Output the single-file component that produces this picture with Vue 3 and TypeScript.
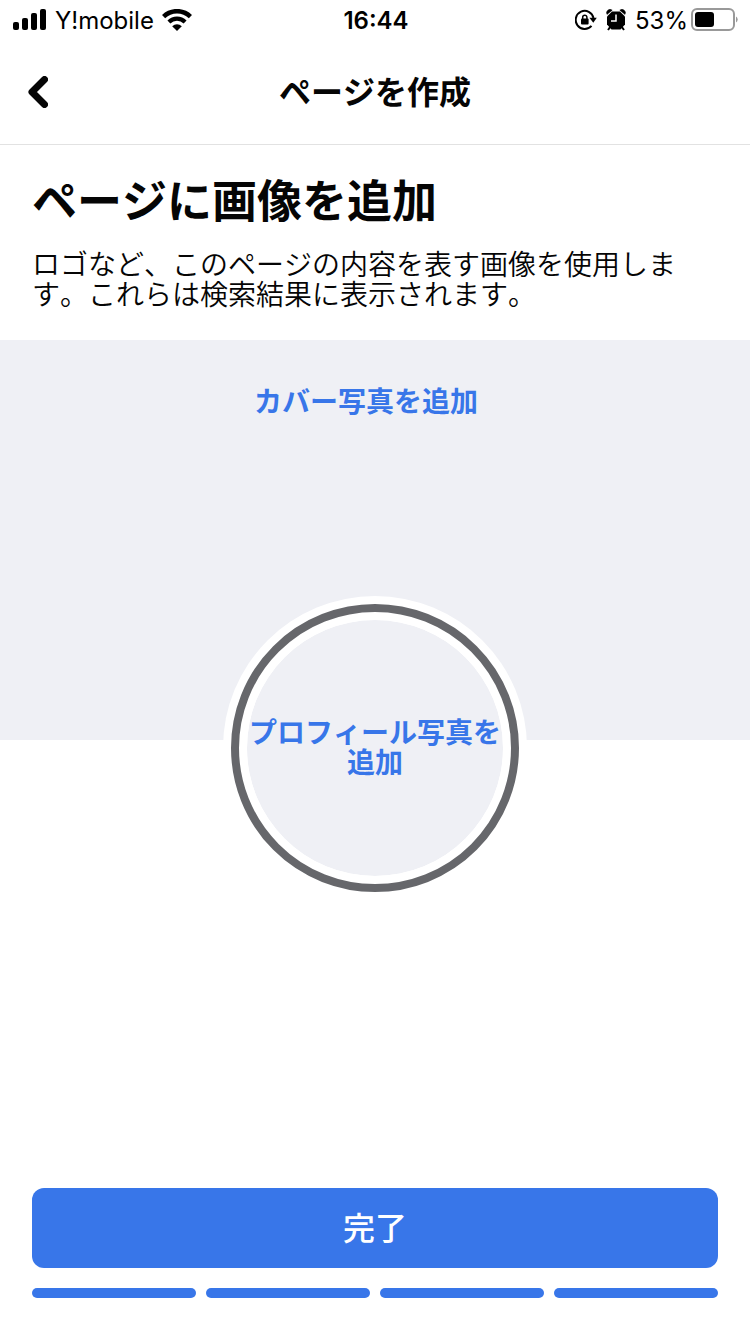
<script setup lang="ts">
import { ref } from 'vue'

interface Step {
  id: number
  label: string
}

const steps: Step[] = [1, 2, 3, 4].map((id) => ({ id, label: `ステップ${id}` }))
const carrier = ref('Y!mobile')
const time = ref('16:44')
const battery = ref(53)
</script>

<template>
  <div class="screen">
    <div class="status">
      <div class="status-left">
        <svg class="signal" width="34" height="22" viewBox="0 0 34 22" aria-hidden="true">
          <rect x="0" y="13" width="6" height="8" rx="2" />
          <rect x="9" y="9" width="6" height="12" rx="2" />
          <rect x="18" y="4" width="6" height="17" rx="2" />
          <rect x="27" y="0" width="6" height="21" rx="2" />
        </svg>
        <span class="carrier">{{ carrier }}</span>
        <svg class="wifi" width="30" height="22" viewBox="0 0 30 22" aria-hidden="true">
          <path d="M1.6 7.6a19.2 19.2 0 0 1 26.8 0" fill="none" stroke="#000" stroke-width="4.500" />
          <path d="M6.9 12.9a11.6 11.6 0 0 1 16.2 0" fill="none" stroke="#000" stroke-width="4.200" />
          <path d="M15 22l-4.8-4.8a7 7 0 0 1 9.600 0z" />
        </svg>
      </div>
      <span class="time">{{ time }}</span>
      <div class="status-right">
        <svg class="lock" width="22" height="22" viewBox="0 0 22 22" aria-hidden="true">
          <path d="M16.500 16.800A9 9 0 1 1 18.500 9" fill="none" stroke="#000" stroke-width="2" />
          <path d="M14.400 8.800h7.400l-3.500 5z" />
          <rect x="6" y="9.500" width="7.600" height="6" rx="1" />
          <path d="M7.700 10V8.300a2.100 2.100 0 0 1 4.200 0V10" fill="none" stroke="#000" stroke-width="1.500" />
        </svg>
        <svg class="alarm" width="20" height="22" viewBox="0 0 20 22" aria-hidden="true">
          <path d="M6 2.500h8l5 5v8l-4.500 5h-9L1 15.500v-8z" />
          <path d="M1 5.400a3.400 3.400 0 0 1 5.200-4.200zM19 5.400a3.400 3.400 0 0 0-5.200-4.200z" stroke="#000" stroke-width=".5" />
          <path d="M4.500 17.500L2 21M15.500 17.500l2.500 3.500" stroke="#000" stroke-width="2" />
          <path d="M10 5.500v6.500H5" fill="none" stroke="#fff" stroke-width="1.500" />
        </svg>
        <span class="percent">{{ battery }}%</span>
        <svg class="battery" width="48" height="24" viewBox="0 0 48 24" aria-hidden="true">
          <rect x="1" y="1" width="42" height="21" rx="5" fill="none" stroke="#999" stroke-width="2" />
          <rect x="4" y="4" width="19" height="15" rx="3" />
          <path d="M45 8.500a3.500 3.500 0 0 1 0 6z" fill="#999" />
        </svg>
      </div>
    </div>

    <header class="header">
      <button class="back" type="button" aria-label="戻る">
        <svg width="20" height="32" viewBox="0 0 20 32" aria-hidden="true">
          <path d="M16.500 3.500L4 16l12.500 12.500" fill="none" stroke="#050505" stroke-width="7" stroke-linecap="round" stroke-linejoin="round" />
        </svg>
      </button>
      <h1 class="title">ページを作成</h1>
    </header>

    <main class="main">
      <section class="intro">
        <h2 class="heading">ページに画像を追加</h2>
        <p class="text">ロゴなど、このページの内容を表す画像を使用します。これらは検索結果に表示されます。</p>
      </section>
      <button class="cover" type="button">カバー写真を追加</button>
      <button class="profile" type="button">
        <span class="profile-inner">プロフィール写真を追加</span>
      </button>
    </main>

    <footer class="footer">
      <button class="done" type="button">完了</button>
      <ol class="steps">
        <li v-for="step in steps" :key="step.id" class="step" :aria-label="step.label"></li>
      </ol>
    </footer>
  </div>
</template>

<style>
body {
  margin: 0;
  background: #fff;
}
</style>

<style scoped>
.screen {
  display: flex;
  flex-direction: column;
  min-height: 100vh;
  background: #fff;
  color: #050505;
  font-family: Inter, "Noto Sans CJK JP", sans-serif;
  font-kerning: none;
}

button {
  margin: 0;
  padding: 0;
  border: 0;
  font-family: inherit;
  font-kerning: none;
  cursor: pointer;
}

svg {
  display: block;
  flex: none;
}

.status {
  display: grid;
  grid-template-columns: 1fr auto 1fr;
  align-items: center;
  height: 40px;
  padding: 0 11px 0 13px;
  color: #000;
  font-size: 24px;
  line-height: 40px;
  font-kerning: normal;
}

.status span {
  padding-top: 2px;
  line-height: 38px;
}

.status-left,
.status-right {
  display: flex;
  align-items: center;
}

.status-left {
  gap: 8px;
}

.status-right {
  justify-content: flex-end;
  gap: 9px;
}

.time {
  font-weight: 600;
}

.battery {
  margin-left: -6px;
}

.header {
  display: grid;
  grid-template-columns: 64px 1fr 64px;
  align-items: center;
  height: 104px;
  border-bottom: 1px solid #e2e2e2;
}

.back {
  display: flex;
  align-items: center;
  height: 64px;
  padding-left: 28px;
  background: none;
}

.title {
  margin: 0;
  padding-top: 2px;
  font-size: 32px;
  font-weight: 700;
  line-height: 40px;
  text-align: center;
}

.main {
  display: flex;
  flex: 1;
  flex-direction: column;
  align-items: center;
}

.intro {
  box-sizing: border-box;
  width: 100%;
  padding: 29px 32px 30px;
}

.heading {
  margin: 0 0 21px;
  font-size: 45px;
  font-weight: 700;
  line-height: 55px;
}

.text {
  margin: 0;
  font-size: 28px;
  font-weight: 350;
  line-height: 30px;
}

.cover {
  display: flex;
  justify-content: center;
  width: 100%;
  height: 400px;
  padding: 47px 18px 0 0;
  background: #eff0f5;
  color: #3876e9;
  font-size: 28px;
  font-weight: 700;
  line-height: 30px;
}

.profile {
  display: flex;
  margin-top: -144px;
  padding: 8px;
  border-radius: 50%;
  background: #fff;
  color: #3876e9;
  font-size: 28px;
  font-weight: 700;
  line-height: 30px;
}

.profile-inner {
  display: flex;
  align-items: center;
  box-sizing: border-box;
  width: 288px;
  height: 288px;
  padding: 8px;
  border: 8px solid #66676b;
  border-radius: 50%;
  background: #eff0f5 content-box;
  box-shadow: inset 0 0 0 8px #fff;
}

.footer {
  padding: 32px 32px 36px;
}

.done {
  display: block;
  width: 100%;
  height: 80px;
  padding-top: 2px;
  border-radius: 12px;
  background: #3876e9;
  color: #fff;
  font-size: 32px;
  font-weight: 500;
  line-height: 40px;
}

.steps {
  display: flex;
  gap: 10px;
  margin: 20px 0 0;
  padding: 0;
  list-style: none;
}

.step {
  flex: 1;
  height: 10px;
  border-radius: 5px;
  background: #3876e9;
}
</style>
